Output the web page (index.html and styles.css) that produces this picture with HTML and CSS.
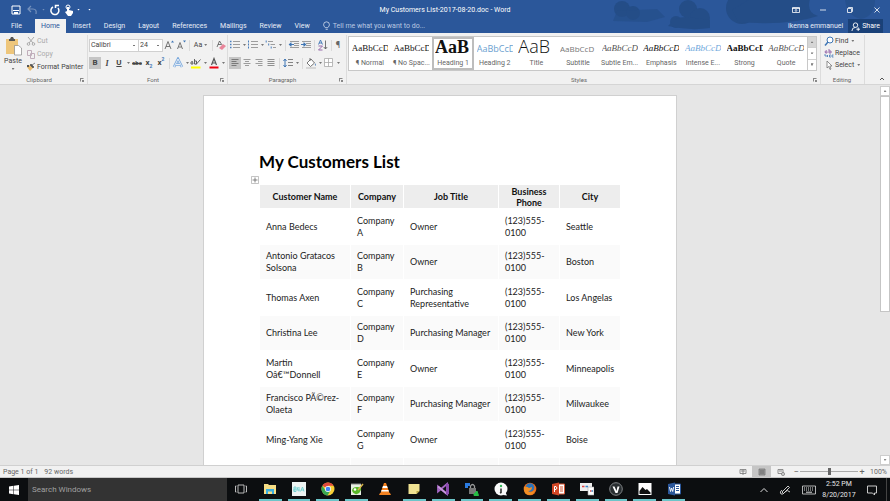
FILE: index.html
```html
<!DOCTYPE html>
<html lang="en">
<head>
<meta charset="utf-8">
<title>My Customers List-2017-08-20.doc - Word</title>
<link rel="stylesheet" href="styles.css">
</head>
<body>
<header class="top">
  <svg class="clouds" viewBox="0 0 290 33" aria-hidden="true"><g fill="#234b83"><circle cx="22" cy="9" r="8"/><circle cx="33" cy="13" r="7"/><path d="M13 21l4-10 40-2 8 8-18 5z" opacity=".6"/><circle cx="88" cy="9" r="9"/><circle cx="100" cy="18" r="10"/><circle cx="76" cy="22" r="6"/><path d="M68 26q8-10 20-9l22 3v8q-20 3-42-2z"/><circle cx="142" cy="8" r="16"/><path d="M132 10l18-11h60q-4 14 8 17-30 10-80 6z"/><path d="M245 0h30q0 16-14 19-14-3-16-19z" opacity=".6"/></g></svg>
  <div class="titlebar">
    <div class="quick">
      <button class="i16" aria-label="Save"><svg viewBox="0 0 12 12"><path d="M2 2h8v8H2z" fill="none" stroke="#fff"/><path d="M3 6h6v1H3zM4 8h4v2H4z" fill="#fff"/></svg></button>
      <button class="i14 dim" aria-label="Undo"><svg viewBox="0 0 12 12"><path d="M5 2L2 5l3 3M2 5h5q4 0 3 5" fill="none" stroke="#fff" stroke-width="1.2"/></svg></button>
      <i class="caret dim"></i>
      <button class="i16" aria-label="Redo"><svg viewBox="0 0 12 12"><path d="M4 3a4 4 0 1 0 5 1M6.500 4V1.500h3.500" fill="none" stroke="#fff" stroke-width="1.500"/></svg></button>
      <button class="i12" aria-label="Touch mode"><svg viewBox="0 0 12 12"><circle cx="5" cy="3" r="2" fill="none" stroke="#fff"/><path d="M4 3h2v3l4 1v2l-2 3H5L2 8l2-1z" fill="#fff"/></svg></button>
      <i class="caret"></i><i class="caret last"></i>
    </div>
    <h1>My Customers List-2017-08-20.doc - Word</h1>
    <div class="winbtns">
      <button aria-label="Ribbon display"><svg viewBox="0 0 12 12"><path d="M2.500 3.500h7v5h-7zM2 4.500h8M6 8V5.500M5 6.500l1-1 1 1" fill="none" stroke="#fff" stroke-width=".8"/></svg></button>
      <button aria-label="Minimize"><svg viewBox="0 0 12 12"><path d="M3 6h6" stroke="#fff" stroke-width=".8"/></svg></button>
      <button aria-label="Restore"><svg viewBox="0 0 12 12"><path d="M3.500 4.500h4v4h-4zM4.500 4V3.500h4v4H8" fill="none" stroke="#fff" stroke-width=".8"/></svg></button>
      <button aria-label="Close"><svg viewBox="0 0 12 12"><path d="M3.500 3.500l5 5m0-5l-5 5" stroke="#fff" stroke-width=".8"/></svg></button>
    </div>
  </div>
  <nav class="tabs">
    <button class="file">File</button><button class="on">Home</button><button>Insert</button><button>Design</button><button>Layout</button><button>References</button><button>Mailings</button><button>Review</button><button>View</button>
    <button class="tell"><svg viewBox="0 0 10 12"><path d="M3.500 8Q1.500 6 1.500 4.500a3.500 3.500 0 0 1 7 0Q8.500 6 6.500 8zM4 10h2.500" fill="none" stroke="#e0e8f4" stroke-width=".9"/></svg>Tell me what you want to do...</button>
    <span class="user">ikenna emmanuel</span>
    <button class="share"><svg viewBox="0 0 10 10"><circle cx="5" cy="3.500" r="2.500" fill="none" stroke="#fff"/><path d="M1 10q0-4 4-4M6 8h4M8 6v4" fill="none" stroke="#fff"/></svg>Share</button>
  </nav>
</header>

<section class="ribbon">
  <div class="group clip">
    <div class="body">
      <button class="paste"><svg viewBox="0 0 17 19"><path d="M1 2h12v15H1z" fill="#eec67b"/><path d="M4 3V2h1l1-2h2l1 2h1v2H4z" fill="#555"/><path d="M9.500 8.500h4l3 2.500v7h-7z" fill="#fff" stroke="#888" stroke-width=".7"/></svg>Paste<i class="caret"></i></button>
      <div class="stack">
        <button class="off"><svg viewBox="0 0 10 10"><path d="M2 1l5 6M8 1L3 7" stroke="#aaa"/><circle cx="2.500" cy="8" r="1.300" fill="none" stroke="#aaa"/><circle cx="7.500" cy="8" r="1.300" fill="none" stroke="#aaa"/></svg>Cut</button>
        <button class="off"><svg viewBox="0 0 10 10"><path d="M1.500 1.500h4v5h-4zM4.500 4.500h4v5h-4z" fill="#f1f1f1" stroke="#c0aebb"/></svg>Copy</button>
        <button><svg viewBox="0 0 10 10"><path d="M1 5l3-2 3 3-3 3z" fill="#e9b968"/><path d="M4 3l1-1 3 3-1 1zM6 3l3-2" fill="#555" stroke="#555" stroke-width=".7"/><path d="M1 3h2v2H1z" fill="#555"/></svg>Format Painter</button>
      </div>
    </div>
    <div class="glabel">Clipboard<i class="launch"></i></div>
  </div>

  <div class="group font">
    <div class="body rows">
      <div class="row">
        <select class="family" aria-label="Font"><option>Calibri</option></select><select class="size" aria-label="Font size"><option>24</option></select>
        <button class="t9" aria-label="Grow font"><svg viewBox="0 0 12 12"><path d="M2 10L5 2.500 8 10M3 7.500h4" fill="none" stroke="#666" stroke-width=".9"/><path d="M8 3.500L9.500 1.500 11 3.500z" fill="#3f76b5"/></svg></button><button class="t8" aria-label="Shrink font"><svg viewBox="0 0 12 12"><path d="M2.500 10L5 3.500 7.500 10M3.500 8h3" fill="none" stroke="#666" stroke-width=".9"/><path d="M8 1.500L9.500 3.500 11 1.500z" fill="#3f76b5"/></svg></button><i class="sep"></i>
        <button class="aa">Aa<i class="caret"></i></button><i class="sep"></i>
        <button aria-label="Clear formatting"><svg viewBox="0 0 12 12"><path d="M2 8l2.500-6L7 6M3 5.500h3" fill="none" stroke="#555" stroke-width=".8"/><path d="M4 9l4-4 3 2-4 4z" fill="#e8869a"/></svg></button>
      </div>
      <div class="row">
        <button class="sel bold">B</button><button class="ital">I</button><button class="under">U</button><i class="caret"></i>
        <button class="strike">abc</button><button class="xx">x<sub>2</sub></button><button class="xx">x<sup>2</sup></button><i class="sep"></i>
        <button aria-label="Text effects"><svg viewBox="0 0 12 12"><path d="M2 10L6 2l4 8M4 7.500h4" fill="none" stroke="#7aa8dc" stroke-width="2.600"/><path d="M2 10L6 2l4 8M4 7.500h4" fill="none" stroke="#fff" stroke-width=".8"/></svg></button><i class="caret"></i>
        <button class="hl" aria-label="Highlight"><svg viewBox="0 0 12 12"><path d="M1 9.500h9.500v2H1z" fill="#ff0"/><path d="M1 5q2-2 2 2H1zM4.500 2v5h2V4h-2M6 7.500l4.500-5" fill="none" stroke="#555" stroke-width=".9"/></svg></button><i class="caret"></i>
        <button aria-label="Font color"><svg viewBox="0 0 12 12"><path d="M1.500 9.500h9v2h-9z" fill="#f00010"/><path d="M3.500 8L6 1.500 8.500 8M4.500 6h3" fill="none" stroke="#555" stroke-width="1.200"/></svg></button><i class="caret"></i>
      </div>
    </div>
    <div class="glabel">Font<i class="launch"></i></div>
  </div>

  <div class="group para">
    <div class="body rows">
      <div class="row">
        <button aria-label="Bullets"><svg viewBox="0 0 12 12"><path d="M4 2.500h7M4 5.500h7M4 8.500h7" stroke="#888" stroke-width=".8"/><path d="M1 2.500h1.500M1 5.500h1.500M1 8.500h1.500" stroke="#4a7ebb" stroke-width="1.500"/></svg></button><i class="caret"></i>
        <button aria-label="Numbering"><svg viewBox="0 0 12 12"><path d="M4 2.500h7M4 5.500h7M4 8.500h7" stroke="#888" stroke-width=".8"/><path d="M1.500 1.500v2M1.500 4.500v2M1.500 7.500v2" stroke="#4a7ebb"/></svg></button><i class="caret"></i>
        <button aria-label="Multilevel list"><svg viewBox="0 0 12 12"><path d="M3 2.500h5M5.500 5.500H10M8 8.500h3" stroke="#888" stroke-width=".8"/><path d="M1.200 1.500v2M3.700 4.500v2M6.200 7.500v2" stroke="#4a7ebb"/></svg></button><i class="caret"></i><i class="sep"></i>
        <button aria-label="Decrease indent"><svg viewBox="0 0 12 12"><path d="M2 2.500h9M6 4.500h5M6 6.500h5M2 8.500h9" stroke="#888" stroke-width=".8"/><path d="M6 5.500H2M3.500 3.700L1.500 5.500l2 1.800" fill="none" stroke="#3f76b5" stroke-width="1.200"/></svg></button>
        <button aria-label="Increase indent"><svg viewBox="0 0 12 12"><path d="M2 2.500h9M6 4.500h5M6 6.500h5M2 8.500h9" stroke="#888" stroke-width=".8"/><path d="M1 5.500h4M3.500 3.700l2 1.800-2 1.800" fill="none" stroke="#3f76b5" stroke-width="1.200"/></svg></button><i class="sep"></i>
        <button aria-label="Sort"><svg viewBox="0 0 12 12"><path d="M1.500 5.500L3.500 1l2 4.500M2 4h3" fill="none" stroke="#3f76b5" stroke-width=".9"/><path d="M1.500 7h4l-4 4h4" fill="none" stroke="#8f5da5" stroke-width=".9"/><path d="M8.500 1.500v8.500M6.800 8l1.700 2 1.700-2" fill="none" stroke="#666" stroke-width=".9"/></svg></button><i class="sep"></i>
        <button class="pil">¶</button>
      </div>
      <div class="row">
        <button class="sel" aria-label="Align left"><svg viewBox="0 0 12 12"><path d="M2.500 2.500h7M2.500 4.500h5M2.500 6.500h7M2.500 8.500h5" stroke="#666" stroke-width=".8"/></svg></button>
        <button aria-label="Center"><svg viewBox="0 0 12 12"><path d="M2.500 2.500h7M4 4.500h4M2.500 6.500h7M4 8.500h4" stroke="#888" stroke-width=".8"/></svg></button>
        <button aria-label="Align right"><svg viewBox="0 0 12 12"><path d="M2.500 2.500h7M5 4.500h4.500M2.500 6.500h7M5 8.500h4.500" stroke="#888" stroke-width=".8"/></svg></button>
        <button aria-label="Justify"><svg viewBox="0 0 12 12"><path d="M2.500 2.500h7M2.500 4.500h7M2.500 6.500h7M2.500 8.500h7" stroke="#777" stroke-width=".8"/></svg></button><i class="sep"></i>
        <button aria-label="Line spacing"><svg viewBox="0 0 12 12"><path d="M6 2.500h5M6 5.500h5M6 8.500h5" stroke="#777" stroke-width=".9"/><path d="M3 2v8M1.500 4L3 2l1.500 2M1.500 8L3 10l1.500-2" fill="none" stroke="#3f76b5"/></svg></button><i class="caret"></i><i class="sep"></i>
        <button aria-label="Shading"><svg viewBox="0 0 12 12"><path d="M2 6l4-4 3.500 4-4 3.500zM5 4V1" fill="#fff" stroke="#666" stroke-width=".9"/><path d="M10 6q1.500 2 .5 3-1-.5-.5-3z" fill="#3f76b5"/><path d="M1 10.500h10v1H1z" fill="#bbb"/></svg></button><i class="caret"></i>
        <button aria-label="Borders"><svg viewBox="0 0 12 12"><path d="M1.500 1.500h8v8h-8zM5.500 1.500v8M1.500 5.500h8" fill="#fff" stroke="#aaa" stroke-width=".8"/></svg></button><i class="caret"></i>
      </div>
    </div>
    <div class="glabel">Paragraph<i class="launch"></i></div>
  </div>

  <div class="group styles">
    <div class="body">
      <div class="gallery">
        <button><span class="pv serif">AaBbCcD</span><span class="nm">¶ Normal</span></button>
        <button><span class="pv serif">AaBbCcD</span><span class="nm">¶ No Spac...</span></button>
        <button class="cur"><span class="pv h1">AaB</span><span class="nm">Heading 1</span></button>
        <button><span class="pv h2">AaBbCcD</span><span class="nm">Heading 2</span></button>
        <button><span class="pv ttl">AaB</span><span class="nm">Title</span></button>
        <button><span class="pv sub">AaBbCcD</span><span class="nm">Subtitle</span></button>
        <button><span class="pv it grey">AaBbCcD</span><span class="nm">Subtle Em...</span></button>
        <button><span class="pv it">AaBbCcD</span><span class="nm">Emphasis</span></button>
        <button><span class="pv it blue">AaBbCcD</span><span class="nm">Intense E...</span></button>
        <button><span class="pv strong">AaBbCcD</span><span class="nm">Strong</span></button>
        <button><span class="pv it grey">AaBbCcD</span><span class="nm">Quote</span></button>
      </div>
      <div class="gscroll"><button class="dis" aria-label="Scroll up"><i class="caret up"></i></button><button aria-label="Scroll down"><i class="caret"></i></button><button aria-label="More styles"><i class="caret more"></i></button></div>
    </div>
    <div class="glabel">Styles<i class="launch"></i></div>
  </div>

  <div class="group edit">
    <div class="body stack">
      <button><svg viewBox="0 0 10 10"><circle cx="6" cy="4" r="3" fill="#fff" stroke="#3f76b5"/><path d="M4 6L1 9.500" stroke="#3f76b5" stroke-width="1.500"/></svg>Find<i class="caret"></i></button>
      <button><svg viewBox="0 0 10 10"><path d="M1 3.500q2-2 2 .5v1H1.500zM5 1v4h2V3H5" fill="none" stroke="#8f5da5" stroke-width=".9"/><path d="M1 6v2h3M3 7l1 1-1 1M7 7H5.500v2H7M9.500 7H8v2h1.500" fill="none" stroke="#3f76b5" stroke-width=".8"/></svg>Replace</button>
      <button><svg viewBox="0 0 10 10"><path d="M3 1v7l1.700-1.500L6 9.500l1-.5-1.200-3H8z" fill="#fff" stroke="#777" stroke-width=".8"/></svg>Select<i class="caret"></i></button>
    </div>
    <div class="glabel">Editing</div>
  </div>
  <button class="collapse" aria-label="Collapse ribbon"><svg viewBox="0 0 8 8"><path d="M2 5l2-2 2 2" fill="none" stroke="#555"/></svg></button>
</section>

<main class="work">
  <div class="canvas">
    <article class="page">
      <h2>My Customers List</h2>
      <div class="tablewrap">
        <span class="handle"><svg viewBox="0 0 8 8"><path d="M.5.5h7v7h-7z" fill="#fff" stroke="#aaa" stroke-width=".7"/><path d="M4 1.500v5M1.500 4h5" stroke="#666" stroke-width=".8"/></svg></span>
        <table>
          <colgroup><col class="c1"><col class="c2"><col class="c3"><col class="c4"><col class="c5"></colgroup>
          <thead><tr><th>Customer Name</th><th>Company</th><th>Job Title</th><th>Business Phone</th><th>City</th></tr></thead>
          <tbody>
            <tr><td>Anna Bedecs</td><td>Company A</td><td>Owner</td><td>(123)555-0100</td><td>Seattle</td></tr>
            <tr><td>Antonio Gratacos Solsona</td><td>Company B</td><td>Owner</td><td>(123)555-0100</td><td>Boston</td></tr>
            <tr><td>Thomas Axen</td><td>Company C</td><td>Purchasing Representative</td><td>(123)555-0100</td><td>Los Angelas</td></tr>
            <tr><td>Christina Lee</td><td>Company D</td><td>Purchasing Manager</td><td>(123)555-0100</td><td>New York</td></tr>
            <tr><td>Martin<br>Oâ€™Donnell</td><td>Company E</td><td>Owner</td><td>(123)555-0100</td><td>Minneapolis</td></tr>
            <tr><td>Francisco PÃ©rez-Olaeta</td><td>Company F</td><td>Purchasing Manager</td><td>(123)555-0100</td><td>Milwaukee</td></tr>
            <tr><td>Ming-Yang Xie</td><td>Company G</td><td>Owner</td><td>(123)555-0100</td><td>Boise</td></tr>
            <tr><td></td><td></td><td></td><td></td><td></td></tr>
          </tbody>
        </table>
      </div>
    </article>
  </div>
  <div class="vscroll"><button aria-label="Scroll up"><i class="caret up"></i></button><div class="thumb"></div><button class="down" aria-label="Scroll down"><i class="caret"></i></button></div>
</main>

<footer class="status">
  <span>Page 1 of 1</span><span>92 words</span>
  <div class="views">
    <button aria-label="Read mode"><svg viewBox="0 0 10 10"><path d="M2 2.500h6v4H2zM5 2.500V8M3 4h4" fill="none" stroke="#777" stroke-width=".8"/></svg></button>
    <button class="sel" aria-label="Print layout"><svg viewBox="0 0 10 10"><path d="M2 2h6v6H2z" fill="#999" stroke="#777" stroke-width=".8"/><path d="M3 4h4M3 6h4" stroke="#555" stroke-width=".7"/></svg></button>
    <button aria-label="Web layout"><svg viewBox="0 0 10 10"><path d="M2 2.500h5v4H2zM3 4h3" fill="none" stroke="#777" stroke-width=".8"/><circle cx="7" cy="7" r="1.600" fill="#ccc" stroke="#777" stroke-width=".7"/></svg></button>
  </div>
  <div class="zoom"><button aria-label="Zoom out">−</button><input type="range" min="0" max="200" value="100" aria-label="Zoom"><button aria-label="Zoom in">+</button></div>
  <span class="pct">100%</span>
</footer>

<footer class="taskbar">
  <button class="start" aria-label="Start"><svg viewBox="0 0 10 10"><path d="M0 1.500L4.500.8v3.900H0zM5 .7L10 0v4.700H5zM0 5.200h4.500v4L0 8.500zM5 5.200h5V10l-5-.7z" fill="#fff"/></svg></button>
  <input class="search" type="text" placeholder="Search Windows" aria-label="Search Windows">
  <div class="apps">
    <button class="idle" aria-label="Task view"><svg viewBox="0 0 14 14"><path d="M4 3h6v8H4zM2.500 4H1.500v6h1M11.500 4h1v6h-1" fill="none" stroke="#ccc" stroke-width=".9"/></svg></button>
    <button aria-label="File Explorer"><svg viewBox="0 0 14 14"><path d="M1 2h4l1 1h7v9H1z" fill="#f6dd85"/><path d="M3 7h8v5H9V9.500H5V12H3z" fill="#3baee0"/></svg></button>
    <button aria-label="B4A"><svg viewBox="0 0 14 14"><path d="M0 0h14v14H0z" fill="#edf3f2"/><path d="M2 5h2v2H2v2.500h2V7M2 5v4.500M6 5L5 8h2.500M7 5v4.500M8.500 9.500L10.500 5l1.500 4.500M9 8h3" fill="none" stroke="#6dcfcf" stroke-width=".9"/></svg></button>
    <button aria-label="Chrome"><svg viewBox="0 0 14 14"><circle cx="7" cy="7" r="6.500" fill="#f8cf36"/><path d="M7 7L1.400 3.700A6.500 6.500 0 0 1 12.600 3.700H7z" fill="#df4a3c"/><path d="M1.400 3.700A6.500 6.500 0 0 0 6.500 13.500L9.500 8.500H4.500z" fill="#39a852"/><circle cx="7" cy="7" r="3" fill="#fff"/><circle cx="7" cy="7" r="2.300" fill="#4285f4"/></svg></button>
    <button aria-label="Notepad++"><svg viewBox="0 0 14 14"><path d="M1 2h10v11H1z" fill="#e8eee3"/><path d="M2 9q0-4 5-4t4 3-4 4-5-3z" fill="#58b829"/><circle cx="5" cy="7.500" r="1.300" fill="#fff"/><path d="M8 8l5-6" stroke="#d8b64b" stroke-width="1.500"/><path d="M1 2h10" stroke="#888"/></svg></button>
    <button class="idle" aria-label="VLC"><svg viewBox="0 0 14 14"><path d="M6 1h2l3.500 10h-9z" fill="#f58220"/><path d="M5 4h4l.7 2H4.300zM3.600 8h6.800l.5 1.500H3.100z" fill="#fff"/><path d="M2 11h10l1 2H1z" fill="#f58220"/></svg></button>
    <button aria-label="Sticky Notes"><svg viewBox="0 0 14 14"><path d="M1.500 2h11v7l-3 3h-8z" fill="#f0e292"/><path d="M9.500 9h3l-3 3z" fill="#b8a545"/></svg></button>
    <button aria-label="Visual Studio"><svg viewBox="0 0 14 14"><path d="M2 4.500v5L11 2v10z" fill="none" stroke="#a566c4" stroke-width="1.800"/><path d="M2 4.500L11 12" stroke="#c795dc" stroke-width="1.800"/><path d="M10 1l3 1v10l-3 1z" fill="#8b4bae"/></svg></button>
    <button aria-label="Secure transfer"><svg viewBox="0 0 14 14"><path d="M0 1h5v3H3v2H0z" fill="#2b7be0"/><path d="M4 6h7v6H4z" fill="#777"/><path d="M5.500 6V4q2-3 4 0v2" fill="none" stroke="#999" stroke-width="1.300"/><path d="M9 12l3-3 1.500 4.500H9z" fill="#26bd45" stroke="#26bd45"/></svg></button>
    <button aria-label="Info"><svg viewBox="0 0 14 14"><circle cx="7" cy="7" r="6.500" fill="#fafafa"/><path d="M7 6.500v4l-1 .5" fill="none" stroke="#333" stroke-width="1.600"/><circle cx="7" cy="4" r="1.200" fill="#35b75b"/><path d="M9 13l4 .5-1.500-3z" fill="#fafafa"/></svg></button>
    <button aria-label="Firefox"><svg viewBox="0 0 14 14"><circle cx="7" cy="7" r="6.300" fill="#e66b19"/><circle cx="7" cy="5.500" r="4.300" fill="#2c73b9"/><path d="M1 5q3-1 5 1l3-1q0 4-4 4 3 3 7-1-1 5-6 5Q0 12 1 5z" fill="#f08e25"/></svg></button>
    <button aria-label="PowerPoint"><svg viewBox="0 0 14 14"><path d="M7 2h6.500v10H7z" fill="#fff" stroke="#d35230"/><path d="M9 5h3M9 7h3M9 9h3" stroke="#d35230"/><path d="M1 2l7-1.500v13L1 12z" fill="#d24726"/><path d="M3.500 10V4.500H5q2 1.500 0 3H3.500" fill="none" stroke="#fff"/></svg></button>
    <button aria-label="Devices"><svg viewBox="0 0 14 14"><path d="M0 1h12v8H0z" fill="#eee"/><path d="M8 5h6v8H8z" fill="#fff" stroke="#aaa" stroke-width=".6"/><path d="M2 4.500h2.500M10 9h1.500" stroke="#df4545" stroke-width="1.500"/><path d="M5.500 4.500H8M11.500 9H13" stroke="#3684c9" stroke-width="1.500"/></svg></button>
    <button aria-label="V app"><svg viewBox="0 0 14 14"><circle cx="7" cy="7" r="6.300" fill="#292e31" stroke="#808487"/><path d="M3.500 4.500h2L7.500 9l1-4.500h2L8.500 11H6.500z" fill="#fff"/></svg></button>
    <button aria-label="Photos"><svg viewBox="0 0 14 14"><path d="M.5 1h13v12H.5z" fill="#fff"/><path d="M1.500 11V9l3-4 3 3 1.500-1 3.500 3.500V12h-11z" fill="#111"/></svg></button>
    <button aria-label="Word"><svg viewBox="0 0 14 14"><path d="M7 2h6.500v10H7z" fill="#fff" stroke="#2b579a"/><path d="M9 4.500h3M9 6.500h3M9 8.500h3" stroke="#2b579a"/><path d="M1 2l7-1.500v13L1 12z" fill="#2b579a"/><path d="M2.500 5l1 4.500L4.600 6l1.100 3.500 1-4.500" fill="none" stroke="#fff" stroke-width=".9"/></svg></button>
  </div>
  <div class="tray">
    <button class="chev" aria-label="Hidden icons"><svg viewBox="0 0 14 14"><path d="M3.500 9L7 5.500 10.500 9" fill="none" stroke="#ddd"/></svg></button>
    <button aria-label="Pen"><svg viewBox="0 0 14 14"><path d="M4 9l6-6 1.500 1.500-6 6zM4 7Q1 9 3 11q2 1 4-2t5 0" fill="none" stroke="#ddd" stroke-width=".9"/></svg></button>
    <button class="kb" aria-label="Keyboard"><svg viewBox="0 0 14 10"><path d="M.5 1h13v8H.5z" fill="none" stroke="#ddd" stroke-width=".8"/><path d="M2 3h10M2 5h10" stroke="#ddd" stroke-dasharray="1 1"/><path d="M4 7.200h6" stroke="#ddd"/></svg></button>
    <div class="clock"><span>2:52 PM</span><span>8/20/2017</span></div>
    <button class="note" aria-label="Notifications"><svg viewBox="0 0 14 14"><path d="M2.500 3h9v7H9.500v2L7.500 10h-5z" fill="none" stroke="#ddd" stroke-width=".9"/></svg></button>
  </div>
</footer>
</body>
</html>
```
FILE: styles.css
```css
* { box-sizing: border-box; }
body {
  margin: 0;
  height: 100vh;
  display: flex;
  flex-direction: column;
  overflow: hidden;
  font: 7px/10px Roboto, "Noto Sans", sans-serif;
  color: #444;
  background: #e6e6e6;
}
button {
  margin: 0;
  padding: 0;
  border: 0;
  background: none;
  font: inherit;
  color: inherit;
  display: flex;
  align-items: center;
  justify-content: center;
}
svg { display: block; flex: none; }
.caret {
  flex: none;
  width: 3px;
  height: 2px;
  margin: 0 1px 0 2px;
  background: currentColor;
  clip-path: polygon(0 0, 100% 0, 50% 100%);
}
.caret.up { clip-path: polygon(0 100%, 100% 100%, 50% 0); }

/* Title bar and tabs */
.top { position: relative; background: #2b579a; color: #fff; flex: none; }
.clouds { position: absolute; right: 0; top: 0; width: 290px; height: 33px; opacity: .8; }
.titlebar, .tabs { position: relative; display: flex; }
.titlebar { height: 19px; align-items: center; justify-content: space-between; }
.titlebar h1 { margin: 0; font-size: 7px; font-weight: 400; }
.quick, .winbtns { width: 120px; display: flex; align-items: center; }
.quick { padding-left: 8px; }
.quick svg, .winbtns svg { width: 12px; height: 12px; }
.i16 { width: 16px; }
.i14 { width: 16px; }
.i12 { width: 12px; }
.quick .caret { margin: 0 2px; }
.quick .last { margin-left: 6px; }
.dim { opacity: .35; }
.winbtns { justify-content: flex-end; }
.winbtns button { width: 27px; height: 19px; }
.tabs { height: 14px; gap: 1px; color: #e8eef7; }
.tabs button { padding: 0 6px; }
.tabs .file { padding: 0 12px 0 11px; }
.tabs .on { background: #f1f1f1; color: #2b579a; }
.tabs .tell { gap: 2px; color: #b9c9e2; padding-left: 5px; }
.tell svg { width: 9px; height: 10px; }
.user { margin-left: auto; padding-right: 4px; line-height: 14px; }
.tabs .share { background: #1a4178; gap: 2px; padding: 0 3px; margin-right: 7px; color: #fff; }
.share svg { width: 9px; height: 9px; }

/* Ribbon */
.ribbon {
  display: flex;
  flex: none;
  height: 52px;
  background: #f1f1f1;
  border-bottom: 1px solid #d5d5d5;
}
.ribbon .caret { background: #777; }
.group { display: flex; flex-direction: column; padding-top: 3px; border-right: 1px solid #dcdcdc; margin-top: 2px; }
.group .body { display: flex; flex: 1; }
.glabel { position: relative; height: 9px; line-height: 9px; padding-right: 9px; text-align: center; font-size: 6px; color: #666; }
.launch {
  position: absolute;
  right: 3px;
  top: 3px;
  width: 4px;
  height: 4px;
  border: 1px solid #888;
  border-right-color: transparent;
  border-bottom-color: transparent;
}
.launch::after { content: ""; position: absolute; left: 1px; top: 1px; width: 2px; height: 2px; background: #888; }
.clip { width: 88px; }
.paste { flex-direction: column; width: 26px; justify-content: flex-start; margin-top: -1px; }
.paste svg { width: 17px; height: 19px; }
.paste .caret { margin: 2px 0 0; }
.stack { display: flex; flex-direction: column; gap: 3px; }
.clip .stack { margin-top: -2px; }
.stack button { justify-content: flex-start; gap: 1px; height: 10px; white-space: nowrap; }
.stack svg { width: 10px; height: 10px; }
.off { color: #aaa; }
.font { width: 140px; }
.para { width: 119px; }
.group .rows { flex-direction: column; gap: 4px; padding-left: 1px; }
.row { display: flex; align-items: center; height: 14px; }
.row button { width: 12px; height: 12px; flex: none; }
.row svg { width: 12px; height: 12px; }
.row .sep { flex: none; width: 1px; height: 11px; background: #dadada; margin: 0 2px; }
.row select {
  appearance: none;
  height: 13px;
  padding: 0 1px;
  border: 1px solid #d0d0d0;
  background: #fff linear-gradient(#777, #777) no-repeat right 3px center / 2px 1px;
  font: 7px/11px Roboto, sans-serif;
  color: #444;
  border-radius: 0;
}
.row .family { width: 50px; }
.row .size { width: 25px; margin-left: -1px; }
.row sup, .row sub { font-size: 5px; line-height: 5px; color: #3f76b5; }
.row sup { align-self: flex-start; }
.row sub { align-self: flex-end; }
.row .aa { width: 18px; font-size: 7px; }
.sel { background: #c5c5c5; }
.row .bold { font-size: 8px; font-weight: 700; }
.row .ital { font: italic 700 8px "Liberation Serif", serif; }
.row .under { font-size: 8px; font-weight: 700; text-decoration: underline; }
.row .strike { font-size: 6px; font-weight: 700; text-decoration: line-through; }
.row .xx { font-size: 8px; font-weight: 700; }
.row .pil { width: 8px; font-size: 9px; color: #666; }

/* Style gallery */
.styles { flex: 1; min-width: 0; }
.gallery { flex: 1; min-width: 0; display: grid; grid-template-columns: repeat(11, minmax(0, 1fr)); border: 1px solid #c8c8c8; background: #fff; height: 35px; margin-top: -2px; margin-left: 1px; }
.gallery button { flex-direction: column; justify-content: flex-start; height: 33px; overflow: hidden; }
.gallery .cur { border: 2px solid #bdbdbd; }
.gallery .cur .pv { margin-top: -2px; }
.pv { display: block; width: 36px; height: 21px; overflow: hidden; line-height: 23px; text-align: left; white-space: nowrap; color: #111; }
.nm { white-space: nowrap; color: #666; line-height: 10px; }
.pv.serif { font-family: "Liberation Serif", serif; font-size: 9px; }
.pv.it { font-family: "Liberation Serif", serif; font-size: 9px; font-style: italic; }
.pv.strong { font-family: "Liberation Serif", serif; font-size: 9px; font-weight: 700; }
.pv.h1 { font-family: "Liberation Serif", serif; font-size: 18px; font-weight: 700; line-height: 20px; }
.pv.h2 { font-family: "Open Sans", sans-serif; font-size: 9px; color: #6b9fd0; }
.pv.ttl { font-family: "Open Sans", sans-serif; font-weight: 300; font-size: 18px; line-height: 19px; }
.pv.sub { font-family: "Open Sans", sans-serif; font-size: 8px; color: #777; }
.pv.grey { color: #555; }
.pv.blue { color: #6fa8dc; }
.gscroll { width: 9px; height: 35px; margin: -2px 3px 0 0; display: flex; flex-direction: column; border: 1px solid #c8c8c8; border-left: 0; background: #fff; }
.gscroll button { flex: 1; }
.gscroll button + button { border-top: 1px solid #d0d0d0; }
.gscroll .caret { margin: 0; }
.gscroll .dis { background: #d6d6d6; color: #aaa; }
.gscroll .more { height: 3px; }
.edit { width: 44px; padding-left: 3px; }
.edit .body { margin-top: -2px; gap: 2px; }
.edit .glabel { padding-right: 4px; }
.collapse { margin-left: 13px; width: 8px; margin-right: 4px; align-self: flex-end; height: 10px; }
.collapse svg { width: 8px; height: 8px; }

/* Document */
.work { flex: 1; min-height: 0; display: flex; }
.canvas { flex: 1; overflow: hidden; padding-top: 10px; }
.page {
  width: 474px;
  min-height: 100%;
  margin: 0 auto;
  padding: 54px 55px 0;
  border: 1px solid #d0d0d0;
  background: #fff;
  color: #222;
  font: 9px/12px Lato, sans-serif;
}
.page h2 { margin: 0; font-size: 17px; line-height: 24px; color: #000; }
.tablewrap { position: relative; margin-top: 10px; }
.handle { position: absolute; left: -8px; top: -8px; width: 8px; height: 8px; }
table { width: 100%; table-layout: fixed; border-collapse: separate; border-spacing: 1px; }
.c1 { width: 90px; }
.c2 { width: 52px; }
.c3 { width: 94px; }
.c4 { width: 60px; }
th, td { padding: 0 6px; height: 34px; text-align: left; vertical-align: middle; }
th { height: 23px; padding: 0; text-align: center; background: #ededed; color: #111; line-height: 11px; }
th:nth-child(4) { padding: 0 8px; }
td:nth-child(2), td:nth-child(4), td:nth-child(5) { padding-right: 2px; }
tbody tr:nth-child(odd) td { height: 35px; }
tbody tr:nth-child(even) td { background: #fafafa; }
.vscroll { width: 10px; display: flex; flex-direction: column; background: #e6e6e6; padding-top: 1px; }
.vscroll button { height: 10px; border: 1px solid #cdcdcd; background: #fff; }
.vscroll .caret { margin: 0; background: #888; }
.vscroll .down { margin-top: auto; }
.thumb { height: 57%; background: #fff; border: 1px solid #c5c5c5; }

/* Status bar */
.status { flex: none; height: 13px; display: flex; align-items: center; gap: 6px; padding: 0 3px; border-top: 1px solid #d0d0d0; border-bottom: 1px solid #c8c8c8; background: #f1f1f1; color: #666; font-size: 7px; }
.views { margin-left: auto; display: flex; }
.views button { width: 19px; height: 11px; }
.views svg { width: 10px; height: 10px; }
.zoom { display: flex; align-items: center; margin-left: -4px; }
.zoom button { width: 8px; font-size: 9px; }
.zoom input { appearance: none; width: 58px; height: 9px; margin: 0; background: linear-gradient(#aaa, #aaa) no-repeat center / 100% 1px; }
.zoom input::-webkit-slider-thumb { appearance: none; width: 3px; height: 7px; background: #666; }
.pct { margin-left: -2px; }

/* Taskbar */
.taskbar { flex: none; height: 23px; display: flex; background: #0c0e10; color: #e8e8e8; }
.start { width: 28px; }
.start svg { width: 10px; height: 10px; }
.search { width: 199px; border: 0; padding: 0 4px; background: #333; color: #bbb; font: 8px/12px Roboto, sans-serif; }
.search::placeholder { color: #a0a0a0; opacity: 1; }
.apps { display: grid; grid-template-columns: repeat(16, minmax(0, 1fr)); width: 461px; }
.apps button { border-bottom: 2px solid #6cc5c9; margin: 0 3px; }
.apps .idle { border-color: transparent; }
.apps svg { width: 14px; height: 14px; }
.tray { margin-left: auto; display: flex; align-items: center; }
.tray button { width: 24px; }
.tray svg { width: 14px; height: 14px; }
.tray .chev { width: 18px; }
.kb svg { height: 10px; }
.clock { width: 36px; display: flex; flex-direction: column; text-align: center; line-height: 11px; }
.clock span { font-size: 7px; }
.tray .note { width: 30px; height: 23px; border-right: 1px solid #444; margin-right: 3px; }
```
